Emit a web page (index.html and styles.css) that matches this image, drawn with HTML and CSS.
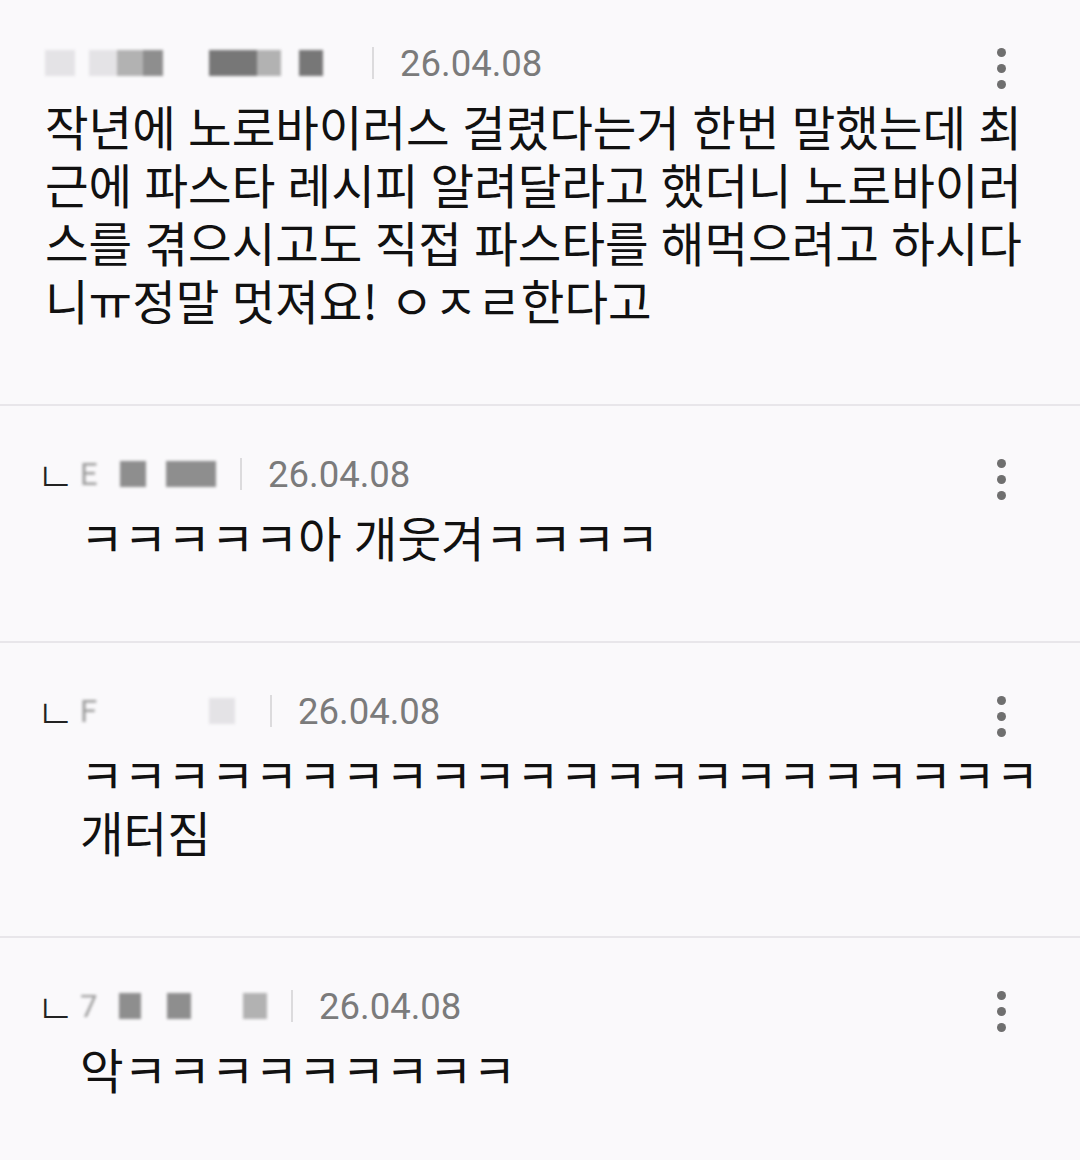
FILE: index.html
```html
<!DOCTYPE html>
<html lang="ko">
<head>
    <meta charset="UTF-8">
    <meta name="viewport" content="width=device-width, initial-scale=1.0">
    <title>댓글</title>
    <link rel="stylesheet" href="styles.css">
</head>
<body>
    <div class="comments">
        <div class="comment first">
            <div class="meta">
                <span class="name name-1">
                    <span class="blk b-faint w30"></span>
                    <span class="gap w14"></span>
                    <span class="blk b-faint w28"></span>
                    <span class="blk b-light w26"></span>
                    <span class="blk b-mid w20"></span>
                    <span class="gap w46"></span>
                    <span class="blk b-dark w48"></span>
                    <span class="blk b-light w24"></span>
                    <span class="gap w18"></span>
                    <span class="blk b-dark w24"></span>
                </span>
                <span class="sep"></span>
                <span class="date">26.04.08</span>
                <button class="more"><span></span><span></span><span></span></button>
            </div>
            <p class="text">작년에 노로바이러스 걸렸다는거 한번 말했는데 최근에 파스타 레시피 알려달라고 했더니 노로바이러스를 겪으시고도 직접 파스타를 해먹으려고 하시다니ㅠ정말 멋져요! ㅇㅈㄹ한다고</p>
        </div>

        <div class="comment reply">
            <div class="meta">
                <span class="reply-mark">ㄴ</span>
                <span class="name name-2">
                    <span class="initial">E</span>
                    <span class="blk b-mid w26"></span>
                    <span class="gap w20"></span>
                    <span class="blk b-mid w50"></span>
                </span>
                <span class="sep"></span>
                <span class="date">26.04.08</span>
                <button class="more"><span></span><span></span><span></span></button>
            </div>
            <p class="text">ㅋㅋㅋㅋㅋ아 개웃겨ㅋㅋㅋㅋ</p>
        </div>

        <div class="comment reply">
            <div class="meta">
                <span class="reply-mark">ㄴ</span>
                <span class="name name-3">
                    <span class="initial">F</span>
                    <span class="gap w90"></span>
                    <span class="blk b-faint w26"></span>
                </span>
                <span class="sep"></span>
                <span class="date">26.04.08</span>
                <button class="more"><span></span><span></span><span></span></button>
            </div>
            <p class="text">ㅋㅋㅋㅋㅋㅋㅋㅋㅋㅋㅋㅋㅋㅋㅋㅋㅋㅋㅋㅋㅋㅋ개터짐</p>
        </div>

        <div class="comment reply">
            <div class="meta">
                <span class="reply-mark">ㄴ</span>
                <span class="name name-4">
                    <span class="initial">7</span>
                    <span class="blk b-mid w22"></span>
                    <span class="gap w26"></span>
                    <span class="blk b-mid w24"></span>
                    <span class="gap w52"></span>
                    <span class="blk b-light w24"></span>
                </span>
                <span class="sep"></span>
                <span class="date">26.04.08</span>
                <button class="more"><span></span><span></span><span></span></button>
            </div>
            <p class="text">악ㅋㅋㅋㅋㅋㅋㅋㅋㅋ</p>
        </div>
    </div>
</body>
</html>
```

FILE: styles.css
```css
body {
    margin: 0;
    background-color: #faf9fb;
    font-family: "Noto Sans CJK KR", "Noto Sans", sans-serif;
    color: #111;
}
.comments {
    width: 1080px;
}
.comment {
    padding: 43px 30px 75px 45px;
    border-bottom: 2px solid #e8e6ea;
}
.comment.first {
    padding-top: 38px;
}
.comment.reply {
    padding-left: 40px;
}
.comment:last-child {
    border-bottom: none;
}
.meta {
    display: flex;
    align-items: center;
    height: 50px;
}
.reply-mark {
    width: 40px;
    font-size: 42px;
    font-weight: 300;
    color: #222;
    line-height: 1;
    margin-left: -4px;
    margin-right: 4px;
}
.name {
    display: flex;
    align-items: center;
    height: 30px;
    filter: blur(1.5px);
}
.name-1 { width: 305px; }
.name-2 { width: 138px; }
.name-3 { width: 168px; }
.name-4 { width: 189px; }
.initial {
    font-family: Roboto, sans-serif;
    font-size: 31px;
    color: #9c9c9c;
    margin-right: 22px;
}
.blk {
    display: inline-block;
    height: 26px;
}
.gap {
    display: inline-block;
    height: 26px;
}
.b-faint { background-color: #e4e3e6; }
.b-light { background-color: #b2b2b2; }
.b-mid { background-color: #8e8e8e; }
.b-dark { background-color: #777; }
.w14 { width: 14px; }
.w18 { width: 18px; }
.w20 { width: 20px; }
.w22 { width: 22px; }
.w24 { width: 24px; }
.w26 { width: 26px; }
.w28 { width: 28px; }
.w30 { width: 30px; }
.w40 { width: 40px; }
.w46 { width: 46px; }
.w48 { width: 48px; }
.w50 { width: 50px; }
.w52 { width: 52px; }
.w90 { width: 90px; }
.sep {
    width: 2px;
    height: 32px;
    background-color: #dcdbdd;
    margin: 0 26px 0 22px;
}
.date {
    font-family: Roboto, sans-serif;
    font-size: 36.5px;
    color: #7b7b7b;
}
.more {
    margin-left: auto;
    margin-right: 37px;
    margin-top: 10px;
    width: 24px;
    padding: 0;
    border: none;
    background: none;
    display: flex;
    flex-direction: column;
    align-items: center;
    gap: 7px;
}
.more span {
    width: 9px;
    height: 9px;
    border-radius: 50%;
    background-color: #6f6f6f;
}
.text {
    margin: 9px 0 0 0;
    font-size: 47.4px;
    line-height: 58px;
    word-spacing: -1px;
}
.reply .text {
    margin-left: 40px;
}
```
